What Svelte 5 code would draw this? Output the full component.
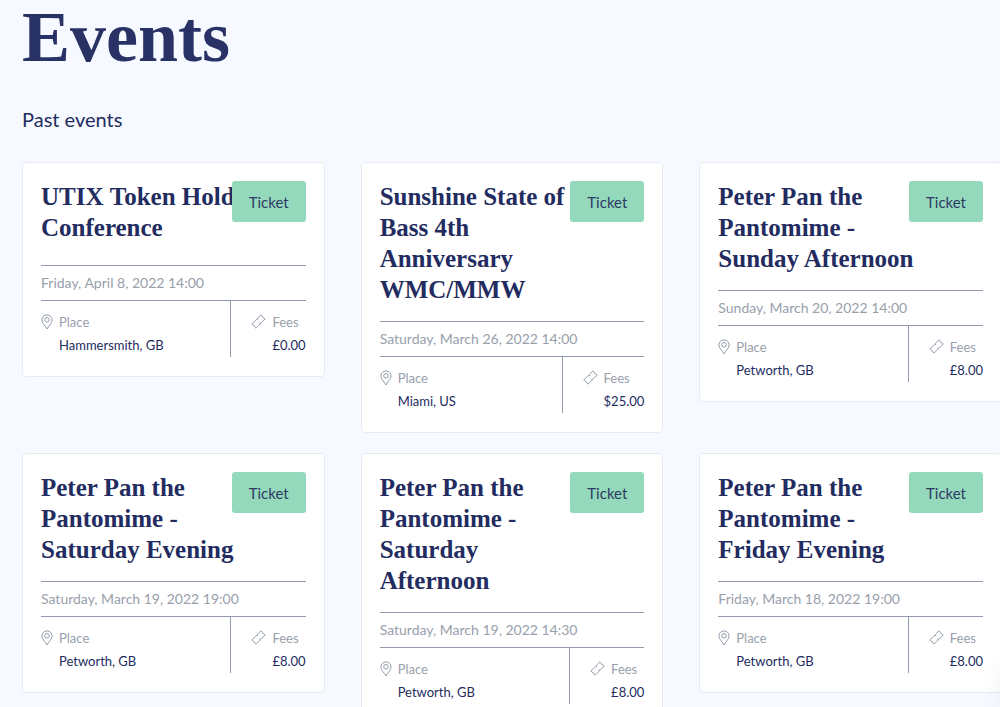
<script>
  const events = [
    {
      title: 'UTIX\u00a0Token\u00a0Holders Conference',
      date: 'Friday, April 8, 2022 14:00',
      place: 'Hammersmith, GB',
      fees: '£0.00'
    },
    {
      title: 'Sunshine State of Bass 4th Anniversary WMC/MMW',
      date: 'Saturday, March 26, 2022 14:00',
      place: 'Miami, US',
      fees: '$25.00'
    },
    {
      title: 'Peter Pan the Pantomime - Sunday Afternoon',
      date: 'Sunday, March 20, 2022 14:00',
      place: 'Petworth, GB',
      fees: '£8.00'
    },
    {
      title: 'Peter Pan the Pantomime - Saturday Evening',
      date: 'Saturday, March 19, 2022 19:00',
      place: 'Petworth, GB',
      fees: '£8.00'
    },
    {
      title: 'Peter Pan the Pantomime - Saturday Afternoon',
      date: 'Saturday, March 19, 2022 14:30',
      place: 'Petworth, GB',
      fees: '£8.00'
    },
    {
      title: 'Peter Pan the Pantomime - Friday Evening',
      date: 'Friday, March 18, 2022 19:00',
      place: 'Petworth, GB',
      fees: '£8.00'
    }
  ]
</script>

<main>
  <h1>Events</h1>
  <h2>Past events</h2>

  <div class="events">
    {#each events as event}
      <article class="card">
        <h3>{event.title}</h3>
        <button type="button">Ticket</button>
        <p class="date">{event.date}</p>
        <div class="details">
          <div class="detail place">
            <svg width="12" height="16" viewBox="0 0 12 16" aria-hidden="true">
              <path d="M6 15C4.8 12.2 .9 9.4 .9 6a5.1 5.1 0 0 1 10.2 0c0 3.4-3.9 6.2-5.1 9z" />
              <circle cx="6" cy="5.8" r="2.3" />
            </svg>
            <dl>
              <dt>Place</dt>
              <dd>{event.place}</dd>
            </dl>
          </div>
          <div class="detail fees">
            <svg width="15" height="15" viewBox="0 0 15 15" aria-hidden="true">
              <path
                d="M10 .8 11.4 2.200c-.4 1 .4 1.800 1.400 1.400L14.200 5 9.900 9.300 8.900 8.800 9 10.200 5 14.200 3.600 12.800c.4-1-.4-1.800-1.400-1.400L.8 10 5.400 5.400 6.700 5.700 6.400 4.400z"
              />
            </svg>
            <dl>
              <dt>Fees</dt>
              <dd>{event.fees}</dd>
            </dl>
          </div>
        </div>
      </article>
    {/each}
  </div>
</main>

<div class="drawer" aria-hidden="true"></div>

<style>
  :global(body) {
    margin: 0;
    overflow-x: hidden;
    background-color: #f6f9ff;
  }

  main {
    padding-left: 22px;
    color: #232c60;
    font-family: Lato, sans-serif;
  }

  h1,
  h2,
  h3,
  p,
  dl,
  dd {
    margin: 0;
  }

  h1 {
    margin-bottom: 33px;
    color: #293264;
    font: bold 72px/74px 'Liberation Serif', serif;
  }

  h2 {
    margin-bottom: 31px;
    font-size: 20px;
    font-weight: 400;
    line-height: 24px;
  }

  .events {
    display: grid;
    grid-template-columns: repeat(3, 1fr);
    gap: 20px 36px;
    align-items: start;
    margin-right: -2px;
  }

  .card {
    position: relative;
    padding: 18px 18px 19px;
    border: 1px solid #e7ebf0;
    border-radius: 4px;
    background-color: #fff;
  }

  h3 {
    width: 80%;
    min-height: 68px;
    margin-bottom: 16px;
    font: bold 25px/31px 'Liberation Serif', serif;
  }

  button {
    position: absolute;
    top: 18px;
    right: 18px;
    width: 74px;
    height: 41px;
    padding: 0;
    border: 0;
    border-radius: 3px;
    background-color: #95d9bd;
    color: #2c3b62;
    font: 15px Lato, sans-serif;
    cursor: pointer;
  }

  .date {
    border: solid #929bae;
    border-width: 1px 0;
    color: #98a0ac;
    font-size: 14px;
    line-height: 34px;
  }

  .details {
    display: flex;
  }

  .detail {
    display: flex;
    padding-top: 10px;
    font-size: 13px;
    line-height: 23px;
  }

  .place {
    flex: 1;
    gap: 6px;
  }

  .fees {
    gap: 6px;
    padding-left: 20px;
    border-left: 1px solid #929bae;
  }

  dt {
    color: #98a0ac;
  }

  svg {
    flex: none;
    margin-top: 3px;
    fill: none;
    stroke: #939dac;
    stroke-width: 1;
    stroke-linejoin: round;
  }

  /* closed side drawer, only its shadow reaches the page */
  .drawer {
    position: fixed;
    right: -60px;
    bottom: 0;
    width: 60px;
    height: 40px;
    box-shadow: 0 0 24px rgba(0, 0, 0, 0.06);
  }
</style>
